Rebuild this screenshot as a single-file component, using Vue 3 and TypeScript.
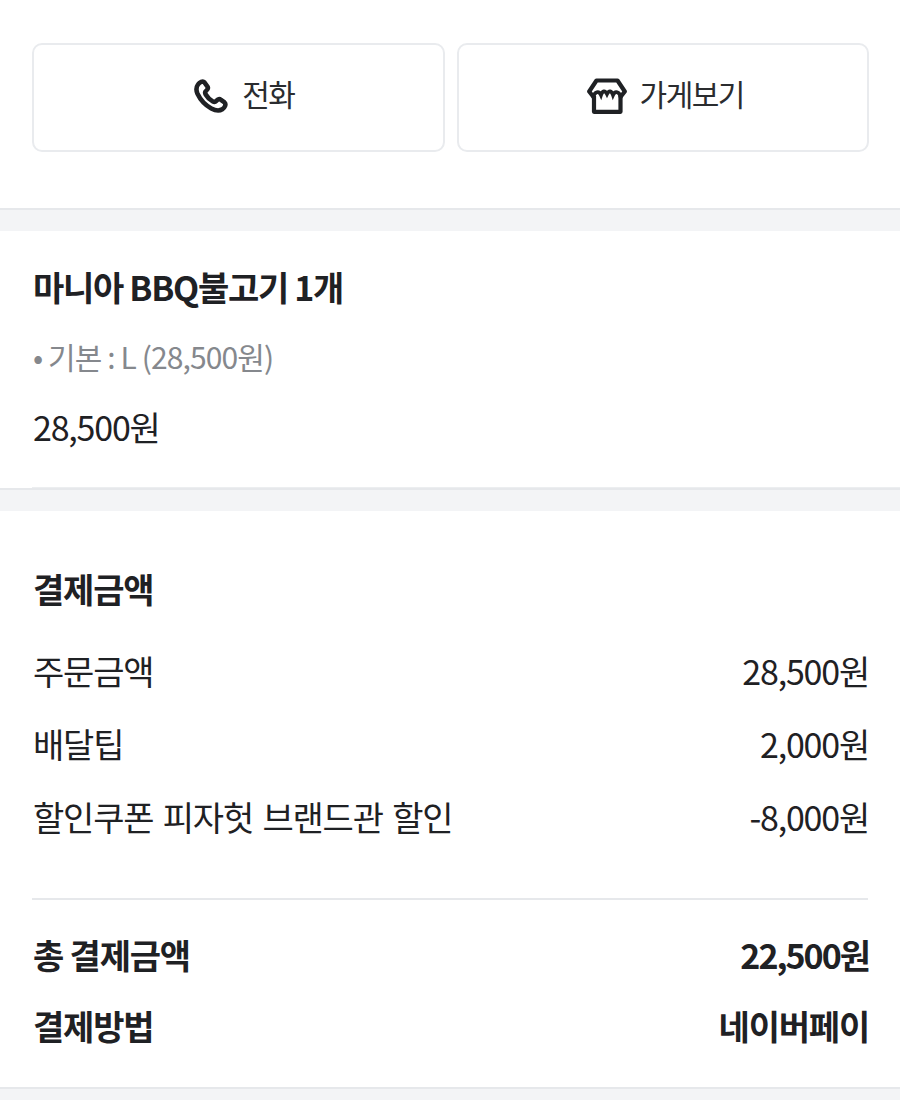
<template>
  <div class="order-detail">
    <section class="actions">
      <button class="action-btn call">
        <svg class="icon" viewBox="0 0 36 36" fill="none">
          <path
            d="M5 6.500 C6.500 4.200 9.800 2.600 11.400 4.400 L14.300 8.300 C15.400 9.900 14.900 11.500 13 13 C11.800 14 11.900 15 12.700 16.500 C14.500 19.600 16.800 21.900 19.900 23.500 C21.300 24.200 22.300 24 23.300 22.900 C24.800 21.200 26.400 20.700 28 21.800 L31.500 24.400 C33.500 26.200 31.700 29.800 29.300 31.300 C26.300 33.100 22.500 32.700 18.300 30.400 C12.300 27.100 7.400 21.800 4.500 15.700 C3 12.300 3.200 9 5 6.500 Z"
            stroke="#1f2124"
            stroke-width="4.600"
            stroke-linejoin="round"
          />
        </svg>
        <span>전화</span>
      </button>
      <button class="action-btn">
        <svg class="icon store" viewBox="0 0 40 36" fill="none">
          <path
            d="M6.500 19 L2.200 13.500 L9.500 2.500 H30.500 L37.800 13.500 L33.500 19"
            stroke="#1f2124"
            stroke-width="4.200"
            stroke-linejoin="round"
          />
          <path
            d="M7 18 V33.800 H33.500 V18"
            stroke="#1f2124"
            stroke-width="4.200"
            stroke-linejoin="round"
          />
          <path
            d="M6.500 19 C7.500 13.500 12 12.500 14 17 C15.500 12.500 18 12 20 16 C22 12 24.500 12.500 26 17 C28 12.500 32.500 13.500 33.500 19"
            stroke="#1f2124"
            stroke-width="3.800"
            stroke-linecap="round"
          />
        </svg>
        <span>가게보기</span>
      </button>
    </section>

    <section class="menu">
      <h2 class="menu-name">마니아 BBQ불고기 1개</h2>
      <p class="menu-option">• 기본 : L (28,500원)</p>
      <p class="menu-price">28,500원</p>
      <div class="menu-line"></div>
    </section>

    <section class="payment">
      <h2 class="pay-title">결제금액</h2>
      <div class="pay-rows">
        <div v-for="row in payRows" :key="row.label" class="pay-row">
          <span>{{ row.label }}</span>
          <span>{{ row.value }}</span>
        </div>
      </div>
      <div class="totals">
        <div class="total-row">
          <span>총 결제금액</span>
          <span class="total-amount">22,500원</span>
        </div>
        <div class="total-row">
          <span>결제방법</span>
          <span>네이버페이</span>
        </div>
      </div>
    </section>
  </div>
</template>

<script setup lang="ts">
type Row = {
  label: string
  value: string
}

const payRows: Row[] = [
  { label: '주문금액', value: '28,500원' },
  { label: '배달팁', value: '2,000원' },
  { label: '할인쿠폰 피자헛 브랜드관 할인', value: '-8,000원' },
]
</script>

<style>
html,
body {
  background: #f3f4f6;
}
</style>

<style scoped>
.order-detail {
  width: 900px;
  height: 1100px;
  overflow: hidden;
  background: #f3f4f6;
  color: #1f2124;
  font-family: 'Noto Sans CJK KR', 'Noto Sans', sans-serif;
  font-size: 34px;
  letter-spacing: -1.2px;
}

section {
  background: #fff;
  border-bottom: 2px solid #e6e8eb;
}

p,
h2 {
  margin: 0;
}

.actions {
  display: grid;
  grid-template-columns: 1fr 1fr;
  gap: 12px;
  height: 210px;
  padding: 43px 31px 56px 32px;
  box-sizing: border-box;
  margin-bottom: 21px;
}

.action-btn {
  display: flex;
  align-items: center;
  justify-content: center;
  gap: 13px;
  height: 109px;
  padding: 0 0 10px 5px;
  border: 2px solid #e9ebee;
  border-radius: 10px;
  background: #fff;
  color: #2a2c2f;
  font: inherit;
  font-size: 30px;
  letter-spacing: -1.5px;
}

.call {
  padding-left: 11px;
}

.icon {
  width: 36px;
  height: 36px;
  margin-top: 6px;
}

.store {
  width: 40px;
}

.menu {
  height: 259px;
  padding: 0 0 0 32px;
  box-sizing: border-box;
  margin-bottom: 21px;
}

.menu-name {
  padding: 32px 0 0 1px;
  font-size: 34px;
  font-weight: 700;
  letter-spacing: -1.300px;
  line-height: 48px;
}

.menu-option {
  margin-top: 25px;
  padding-left: 1px;
  color: #85888d;
  font-size: 30px;
  letter-spacing: -0.900px;
  line-height: 40px;
}

.menu-price {
  margin-top: 28px;
  padding-left: 1px;
  line-height: 46px;
}

.menu-line {
  height: 1px;
  margin-top: 37px;
  background: #eceef0;
}

.payment {
  height: 578px;
  padding: 0 32px;
  box-sizing: border-box;
}

.pay-title {
  padding: 54px 0 0 1px;
  font-size: 34px;
  font-weight: 700;
  line-height: 48px;
}

.pay-rows {
  display: grid;
  gap: 27px;
  margin-top: 35px;
  word-spacing: 3px;
}

.pay-row,
.total-row {
  display: flex;
  justify-content: space-between;
  padding-left: 1px;
  margin-right: -1px;
  line-height: 46px;
}

.totals {
  display: grid;
  gap: 25px;
  margin-top: 58px;
  padding-top: 32px;
  border-top: 2px solid #e6e8eb;
  font-weight: 700;
}

.total-amount {
  letter-spacing: -2px;
}
</style>
